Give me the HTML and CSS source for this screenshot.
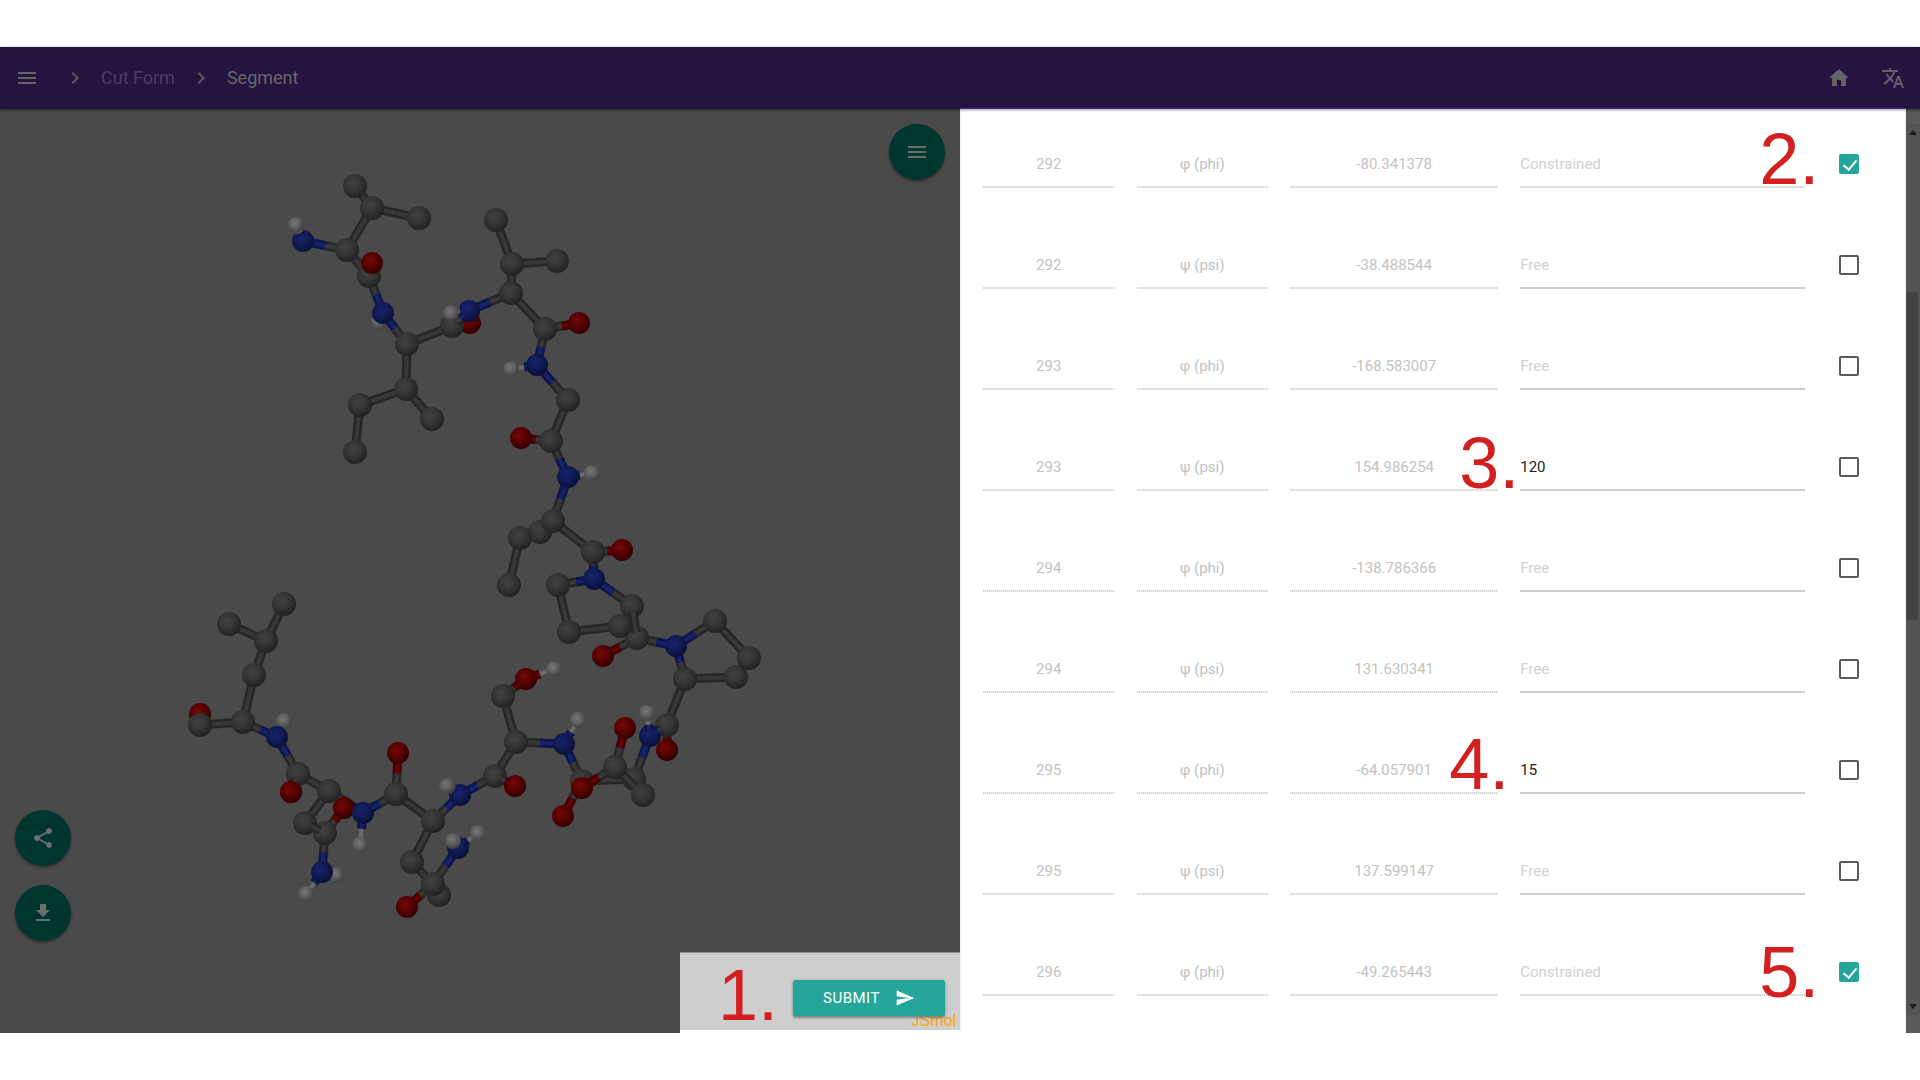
FILE: index.html
```html
<!DOCTYPE html>
<html lang="en">
<head>
<meta charset="utf-8">
<title>Segment</title>
<link rel="stylesheet" href="styles.css">
</head>
<body>
<div class="app">
  <header class="navbar">
    <button class="icon-button" aria-label="Menu"><svg class="icon" viewBox="0 0 24 24"><path d="M3 18h18v-2H3v2zm0-5h18v-2H3v2zm0-7v2h18V6H3z"/></svg></button>
    <nav class="crumbs">
      <svg class="icon" viewBox="0 0 24 24"><path d="M10 6 8.590 7.410 13.170 12l-4.580 4.590L10 18l6-6z"/></svg>
      <a class="crumb" href="#">Cut Form</a>
      <svg class="icon" viewBox="0 0 24 24"><path d="M10 6 8.590 7.410 13.170 12l-4.580 4.590L10 18l6-6z"/></svg>
      <a class="crumb crumb-current" href="#">Segment</a>
    </nav>
    <div class="nav-actions">
      <a href="#" class="icon-button" aria-label="Home"><svg class="icon" viewBox="0 0 24 24"><path d="M10 20v-6h4v6h5v-8h3L12 3 2 12h3v8z"/></svg></a>
      <a href="#" class="icon-button" aria-label="Language"><svg class="icon" viewBox="0 0 24 24"><path d="M12.870 15.070l-2.540-2.510.03-.03c1.740-1.940 2.980-4.170 3.710-6.530H17V4h-7V2H8v2H1v1.990h11.170C11.500 7.920 10.440 9.750 9 11.350 8.070 10.320 7.300 9.190 6.690 8h-2c.73 1.630 1.730 3.170 2.980 4.560l-5.090 5.020L4 19l5-5 3.110 3.110.76-2.040zM18.500 10h-2L12 22h2l1.120-3h4.750L21 22h2l-4.500-12zm-2.620 7l1.620-4.330L19.120 17h-3.240z"/></svg></a>
    </div>
  </header>
  <main class="content">
    <section class="viewer">
      <svg class="molecule" id="molecule" viewBox="0 109 960 924" preserveAspectRatio="xMidYMin meet" role="img" aria-label="Molecule">
        <defs>
          <radialGradient id="ball-C" cx="42%" cy="38%" r="62%"><stop offset="0" stop-color="#414141"/><stop offset=".45" stop-color="#373737"/><stop offset="1" stop-color="#222"/></radialGradient>
          <radialGradient id="ball-N" cx="42%" cy="38%" r="62%"><stop offset="0" stop-color="#17246c"/><stop offset=".45" stop-color="#121c59"/><stop offset="1" stop-color="#0a1036"/></radialGradient>
          <radialGradient id="ball-O" cx="42%" cy="38%" r="62%"><stop offset="0" stop-color="#740808"/><stop offset=".45" stop-color="#5c0303"/><stop offset="1" stop-color="#330000"/></radialGradient>
          <radialGradient id="ball-H" cx="42%" cy="38%" r="62%"><stop offset="0" stop-color="#777"/><stop offset=".45" stop-color="#626262"/><stop offset="1" stop-color="#404040"/></radialGradient>
        </defs>
      </svg>
      <button class="fab fab-menu" aria-label="View options"><svg class="icon" viewBox="0 0 24 24"><path d="M3 18h18v-2H3v2zm0-5h18v-2H3v2zm0-7v2h18V6H3z"/></svg></button>
      <div class="fab-stack">
        <button class="fab" aria-label="Share"><svg class="icon" viewBox="0 0 24 24"><path d="M18 16.080c-.76 0-1.440.3-1.960.77L8.910 12.700c.05-.23.09-.46.09-.7s-.04-.47-.09-.7l7.050-4.110c.54.5 1.250.81 2.040.81 1.660 0 3-1.340 3-3s-1.340-3-3-3-3 1.340-3 3c0 .24.04.47.09.7L8.040 9.810C7.500 9.310 6.790 9 6 9c-1.660 0-3 1.340-3 3s1.340 3 3 3c.79 0 1.500-.31 2.040-.81l7.120 4.160c-.05.21-.08.43-.08.65 0 1.610 1.310 2.920 2.920 2.920s2.920-1.310 2.920-2.920-1.310-2.920-2.920-2.920z"/></svg></button>
        <button class="fab" aria-label="Download"><svg class="icon" viewBox="0 0 24 24"><path d="M19 9h-4V3H9v6H5l7 7 7-7zM5 18v2h14v-2H5z"/></svg></button>
      </div>
      <div class="submit-bar">
        <span class="mark mark-submit">1.</span>
        <a class="credit" href="#">JSmol</a>
        <button class="submit">SUBMIT<svg class="send" viewBox="0 0 24 24"><path d="M2.010 21 23 12 2.010 3 2 10l15 2-15 2z"/></svg></button>
      </div>
    </section>
    <form class="panel">
      <div class="row">
        <div class="cell"><input class="field" aria-label="Residue" value="292" disabled></div>
        <div class="cell"><input class="field" aria-label="Angle" value="φ (phi)" disabled></div>
        <div class="cell"><input class="field" aria-label="Current" value="-80.341378" disabled></div>
        <div class="cell"><input class="field target" aria-label="Target" placeholder="Constrained" disabled><span class="mark mark-end">2.</span></div>
        <div class="cell tick"><input type="checkbox" aria-label="Constrain" checked></div>
      </div>
      <div class="row">
        <div class="cell"><input class="field" aria-label="Residue" value="292" disabled></div>
        <div class="cell"><input class="field" aria-label="Angle" value="ψ (psi)" disabled></div>
        <div class="cell"><input class="field" aria-label="Current" value="-38.488544" disabled></div>
        <div class="cell"><input class="field target" aria-label="Target" placeholder="Free"></div>
        <div class="cell tick"><input type="checkbox" aria-label="Constrain"></div>
      </div>
      <div class="row">
        <div class="cell"><input class="field" aria-label="Residue" value="293" disabled></div>
        <div class="cell"><input class="field" aria-label="Angle" value="φ (phi)" disabled></div>
        <div class="cell"><input class="field" aria-label="Current" value="-168.583007" disabled></div>
        <div class="cell"><input class="field target" aria-label="Target" placeholder="Free"></div>
        <div class="cell tick"><input type="checkbox" aria-label="Constrain"></div>
      </div>
      <div class="row">
        <div class="cell"><input class="field" aria-label="Residue" value="293" disabled></div>
        <div class="cell"><input class="field" aria-label="Angle" value="ψ (psi)" disabled></div>
        <div class="cell"><input class="field" aria-label="Current" value="154.986254" disabled></div>
        <div class="cell"><input class="field target" aria-label="Target" value="120"><span class="mark mark-start">3.</span></div>
        <div class="cell tick"><input type="checkbox" aria-label="Constrain"></div>
      </div>
      <div class="row">
        <div class="cell"><input class="field" aria-label="Residue" value="294" disabled></div>
        <div class="cell"><input class="field" aria-label="Angle" value="φ (phi)" disabled></div>
        <div class="cell"><input class="field" aria-label="Current" value="-138.786366" disabled></div>
        <div class="cell"><input class="field target" aria-label="Target" placeholder="Free"></div>
        <div class="cell tick"><input type="checkbox" aria-label="Constrain"></div>
      </div>
      <div class="row">
        <div class="cell"><input class="field" aria-label="Residue" value="294" disabled></div>
        <div class="cell"><input class="field" aria-label="Angle" value="ψ (psi)" disabled></div>
        <div class="cell"><input class="field" aria-label="Current" value="131.630341" disabled></div>
        <div class="cell"><input class="field target" aria-label="Target" placeholder="Free"></div>
        <div class="cell tick"><input type="checkbox" aria-label="Constrain"></div>
      </div>
      <div class="row">
        <div class="cell"><input class="field" aria-label="Residue" value="295" disabled></div>
        <div class="cell"><input class="field" aria-label="Angle" value="φ (phi)" disabled></div>
        <div class="cell"><input class="field" aria-label="Current" value="-64.057901" disabled></div>
        <div class="cell"><input class="field target" aria-label="Target" value="15"><span class="mark mark-before">4.</span></div>
        <div class="cell tick"><input type="checkbox" aria-label="Constrain"></div>
      </div>
      <div class="row">
        <div class="cell"><input class="field" aria-label="Residue" value="295" disabled></div>
        <div class="cell"><input class="field" aria-label="Angle" value="ψ (psi)" disabled></div>
        <div class="cell"><input class="field" aria-label="Current" value="137.599147" disabled></div>
        <div class="cell"><input class="field target" aria-label="Target" placeholder="Free"></div>
        <div class="cell tick"><input type="checkbox" aria-label="Constrain"></div>
      </div>
      <div class="row">
        <div class="cell"><input class="field" aria-label="Residue" value="296" disabled></div>
        <div class="cell"><input class="field" aria-label="Angle" value="φ (phi)" disabled></div>
        <div class="cell"><input class="field" aria-label="Current" value="-49.265443" disabled></div>
        <div class="cell"><input class="field target" aria-label="Target" placeholder="Constrained" disabled><span class="mark mark-end mark-low">5.</span></div>
        <div class="cell tick"><input type="checkbox" aria-label="Constrain" checked></div>
      </div>
    </form>
    <div class="scroll">
      <div class="track">
        <svg class="arrow" viewBox="0 0 8 5"><path d="M4 0 8 5H0z"/></svg>
        <div class="lane"><div class="thumb"></div></div>
        <svg class="arrow" viewBox="0 0 8 5"><path d="M4 5 8 0H0z"/></svg>
      </div>
    </div>
  </main>
</div>
<script src="molecule.js"></script>
</body>
</html>
```
FILE: styles.css
```css
* { box-sizing: border-box; }
body { margin: 0; background: #fff; font-family: Roboto, sans-serif; font-size: 15px; }
button { border: 0; padding: 0; font: inherit; }
.app { margin: 47px 0; }
.icon { display: block; width: 24px; height: 24px; fill: currentColor; flex: none; }
.navbar { position: relative; z-index: 2; display: flex; align-items: center; height: 62px; padding: 0 15px 1px; background: #24143f; color: #656269; box-shadow: 0 1px 3px rgba(0,0,0,.5); }
.icon-button { background: none; color: inherit; }
.crumbs { display: flex; align-items: center; gap: 14px; margin-left: 24px; color: #5b5661; }
.crumb { color: #4a405a; font-size: 18px; line-height: 24px; text-decoration: none; }
.crumb-current { color: #69666c; }
.nav-actions { display: flex; gap: 30px; margin-left: auto; }
.content { display: flex; align-items: stretch; }
.viewer { position: relative; flex: 0 0 50%; background: #4a4a4a; }
.molecule { display: block; width: 100%; }
.fab { display: grid; place-items: center; width: 56px; height: 56px; border-radius: 50%; background: #01362f; color: #6a6e6d; box-shadow: 0 2px 3px rgba(0,0,0,.35); }
.fab-menu { position: absolute; top: 15px; right: 15px; }
.fab-stack { position: absolute; left: 15px; bottom: 92px; display: grid; gap: 19px; }
.submit-bar { position: absolute; right: 0; bottom: 0; display: flex; align-items: center; justify-content: flex-end; width: 280px; height: 81px; padding: 12px 15px 0 0; background: #cecece; border-top: 1px solid #8e8e8e; border-bottom: 3px solid #fff; }
.submit { position: relative; display: flex; align-items: center; justify-content: center; gap: 15px; width: 152px; height: 36px; border-radius: 2px; background: #26a69a; color: #fff; letter-spacing: 0.5px; box-shadow: 0 2px 2px rgba(0,0,0,.25), 0 1px 4px rgba(0,0,0,.2); }
.send { width: 20px; height: 20px; fill: currentColor; }
.credit { position: absolute; right: 4px; bottom: 0; color: orange; font: 16px/18px "Liberation Sans", Arial, sans-serif; text-decoration: none; }
.panel { position: relative; z-index: 3; flex: 1; min-width: 0; margin-top: -1px; padding: 5px 13px 10px 12px; background: #fff; border-top: 1px solid #4a2a8c; box-shadow: inset 0 2px 3px -1px rgba(0,0,0,.4); }
.row { display: grid; grid-template-columns: 2fr 2fr 3fr 4fr 1fr; align-items: center; height: 101px; }
.cell { position: relative; min-width: 0; padding: 0 11px; }
.field { display: block; width: 100%; height: 46px; padding: 0; border: 0; border-bottom: 2px solid #cdcdcd; border-radius: 0; background: transparent; color: #222; font: 15px Roboto, sans-serif; text-align: center; outline: 0; }
.field:disabled { color: #c2c2c2; border-bottom-color: transparent; background: repeating-linear-gradient(90deg, #d4d4d4 0 1px, #f0f0f0 1px 2px) border-box bottom / 100% 2px no-repeat; }
.field.target { text-align: left; }
.field::placeholder { color: #d1d1d1; opacity: 1; }
.tick { display: grid; padding: 0 0 2px 23px; }
.tick input { position: relative; appearance: none; width: 20px; height: 20px; margin: 0; border: 2px solid #5a5a5a; border-radius: 2px; }
.tick input:checked { border-color: #26a69a; background: #26a69a; }
.tick input:checked::after { content: ""; position: absolute; left: 5px; top: 1px; width: 6px; height: 11px; border: solid #fff; border-width: 0 2px 2px 0; transform: rotate(40deg); }
.mark { position: absolute; color: #d22020; font: 72px/72px "Liberation Sans", Arial, sans-serif; pointer-events: none; }
.mark-submit { left: 38px; top: 6px; }
.mark-end { right: -3px; bottom: -7px; }
.mark-low { bottom: -12px; }
.mark-start { left: -50px; bottom: -8px; }
.mark-before { left: -60px; bottom: -6px; }
.scroll { flex: 0 0 14px; padding: 15px 0 18px; background: #5a5a5a; }
.track { display: flex; flex-direction: column; align-items: center; height: 100%; padding: 6px 0; background: #545454; }
.arrow { width: 8px; height: 5px; fill: #1c1c1c; }
.lane { flex: 1; width: 100%; padding: 157px 2px 0 1px; }
.thumb { height: 328px; background: #424242; }
```
FILE: molecule.js
```js
// Atoms are listed from back to front: id, element, x, y.
const atoms = `
h9 H 379 322|o16 O 470 323|o99 O 200 714|c32 C 540 532|h90 H 336 875|c75 C 439 895|o87 O 344 808|o50 O 667 750|h92 H 284 721
c1 C 355 186|c2 C 372 208|c3 C 419 218|c4 C 347 250|n5 N 303 241|h6 H 296 225|c7 C 369 276|o8 O 372 263|n9 N 383 313
c10 C 407 344|c11 C 406 389|c12 C 360 405|c13 C 355 452|c14 C 432 419|c15 C 452 326|n17 N 469 311|c18 C 511 293|c19 C 512 264
c20 C 496 220|c21 C 557 261|c22 C 545 329|o23 O 579 323|n24 N 537 365|h25 H 511 369|c26 C 568 400|c27 C 551 441|o28 O 521 438
n29 N 568 477|h30 H 592 473|c31 C 553 521|c33 C 520 538|c34 C 509 585|c35 C 593 552|o36 O 622 550|n37 N 594 579|c38 C 558 585
c39 C 569 632|c42 C 637 638|c41 C 632 606|c40 C 620 626|o43 O 603 656|n44 N 676 646|c45 C 715 621|c47 C 736 677|c46 C 749 658
c48 C 685 679|c49 C 667 725|n51 N 650 736|h52 H 647 713|c53 C 634 779|c57 C 582 781|o59 O 563 816|n60 N 564 744|h61 H 578 720
c62 C 516 742|c63 C 503 696|o64 O 526 679|h65 H 554 669|o67 O 515 786|c66 C 495 776|n68 N 460 795|c70 C 433 821|c71 C 396 794
o72 O 398 753|c73 C 412 862|c74 C 433 884|o76 O 407 907|n77 N 458 848|h79 H 478 833|n80 N 363 813|h81 H 360 845|c82 C 329 791
c83 C 298 774|o84 O 291 792|c85 C 305 823|c86 C 325 833|n88 N 322 872|h89 H 306 894|n91 N 277 737|c93 C 243 722|c94 C 254 675
c95 C 266 641|c96 C 284 604|c97 C 229 624|c98 C 200 725`;
const bonds = `c1-c2 c2-c3 c2-c4 c4-n5 c4-c7 c7-n9 n9-c10 c10-c11 c11-c12 c12-c13 c11-c14 c10-c15 c15-o16 n17-c18 c18-c19 c19-c20
c19-c21 c18-c22 c22-o23 c22-n24 n24-h25 n24-c26 c26-c27 c27-o28 c27-n29 n29-h30 n29-c31 c31-c32 c31-c33 c33-c34 c31-c35 c35-o36 c35-n37
n37-c38 c38-c39 c39-c40 n37-c41 c42-o43 c42-n44 n44-c45 c45-c46 c46-c47 c47-c48 n44-c48 c48-c49 c49-o50 n51-c53 c53-c57 c57-o59
c57-n60 n60-h61 n60-c62 c62-c63 c63-o64 o64-h65 c62-c66 n68-c66 n68-c70 c70-c71 c71-o72 c71-n80 n80-h81 n80-c82 c82-c83
c82-c85 c86-o87 c86-n88 n88-h89 n88-h90 c70-c73 c73-c74 c74-o76 c74-n77 n77-h79 c83-n91 n91-h92 n91-c93 c93-c94
c94-c95 c95-c96 c95-c97 c93-c98`;
// Bonds and atoms that pass in front of the rest of the chain.
const frontBonds = `n5-h6 n17-h17 c15-n17 c41-c42 c49-n51 n51-h52 n68-h69 n77-h78 c85-c86 c83-o84 c66-o67 c55-c54 c55-o56 c55-o58`;
const frontAtoms = `h6 H 296 225|h17 H 451 313|h52 H 647 713|h69 H 447 786|h78 H 453 841|o84 O 291 792|c54 C 643 795|c55 C 615 767|o56 O 625 728|o58 O 582 788`;

const radius = { C: 12, N: 11, O: 11, H: 8 };
const shade = { C: ["#262626", "#383838"], N: ["#0d154a", "#16226a"], O: ["#440000", "#640404"], H: ["#4c4c4c", "#6a6a6a"] };
const svg = document.getElementById("molecule");
const parse = text => text.trim().split(/[|\n]/).map(s => {
  const [id, el, x, y] = s.split(" ");
  return { id, el, x: +x, y: +y };
});
const back = parse(atoms), front = parse(frontAtoms);
const byId = Object.fromEntries([...back, ...front].map(a => [a.id, a]));

function add(name, attrs) {
  const node = document.createElementNS("http://www.w3.org/2000/svg", name);
  for (const key in attrs) node.setAttribute(key, attrs[key]);
  svg.append(node);
}
function half(a, mx, my, trim) {
  const d = Math.hypot(mx - a.x, my - a.y) || 1, t = Math.min(trim, d) / d;
  const line = { x1: a.x + (mx - a.x) * t, y1: a.y + (my - a.y) * t, x2: mx, y2: my };
  add("line", { ...line, stroke: shade[a.el][0], "stroke-width": 9 });
  add("line", { ...line, stroke: shade[a.el][1], "stroke-width": 4 });
}
function drawBonds(list, trim) {
  list.trim().split(/\s+/).forEach(pair => {
    const [a, b] = pair.split("-").map(id => byId[id]);
    const mx = (a.x + b.x) / 2, my = (a.y + b.y) / 2;
    half(a, mx, my, trim);
    half(b, mx, my, trim);
  });
}
const drawAtom = a => add("circle", { cx: a.x, cy: a.y, r: radius[a.el], fill: `url(#ball-${a.el})` });

drawBonds(bonds, 0);
back.forEach(drawAtom);
drawBonds(frontBonds, 6);
front.forEach(drawAtom);
```
